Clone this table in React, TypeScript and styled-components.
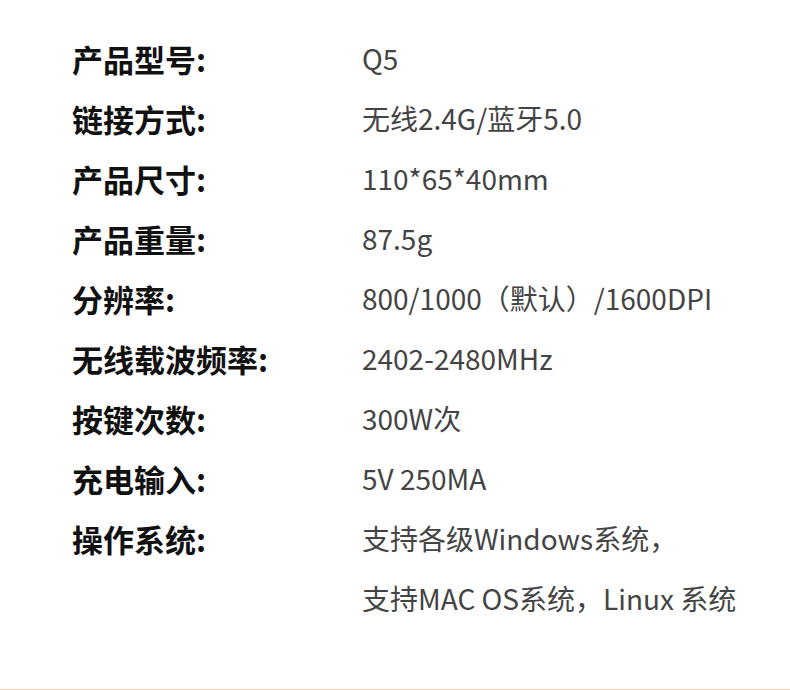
import styled, { createGlobalStyle } from "styled-components";

const GlobalStyle = createGlobalStyle`
  html, body {
    margin: 0;
    padding: 0;
    background: #ffffff;
  }
`;

const Page = styled.div`
  width: 790px;
  height: 690px;
  box-sizing: border-box;
  padding: 28px 0 0 72px;
  border-bottom: 1px solid #fac5a8;
  font-family: "Noto Sans CJK SC", "Noto Sans", sans-serif;
`;

const Specs = styled.div`
  display: grid;
  grid-template-columns: 290px 1fr;
  grid-auto-rows: 60px;
  align-items: center;
`;

const Label = styled.div`
  font-size: 31px;
  font-weight: 700;
  color: #111111;
  white-space: nowrap;
`;

const Value = styled.div`
  font-size: 28px;
  font-weight: 400;
  color: #444444;
  white-space: nowrap;
`;

const specs: [string, string][] = [
  ["产品型号:", "Q5"],
  ["链接方式:", "无线2.4G/蓝牙5.0"],
  ["产品尺寸:", "110*65*40mm"],
  ["产品重量:", "87.5g"],
  ["分辨率:", "800/1000（默认）/1600DPI"],
  ["无线载波频率:", "2402-2480MHz"],
  ["按键次数:", "300W次"],
  ["充电输入:", "5V 250MA"],
  ["操作系统:", "支持各级Windows系统，"],
  ["", "支持MAC OS系统，Linux 系统"],
];

const App = () => {
  return (
    <>
      <GlobalStyle />
      <Page>
        <Specs>
          {specs.map(([label, value], i) => (
            <>
              <Label key={"l" + i}>{label}</Label>
              <Value key={"v" + i}>{value}</Value>
            </>
          ))}
        </Specs>
      </Page>
    </>
  );
};

export default App;
